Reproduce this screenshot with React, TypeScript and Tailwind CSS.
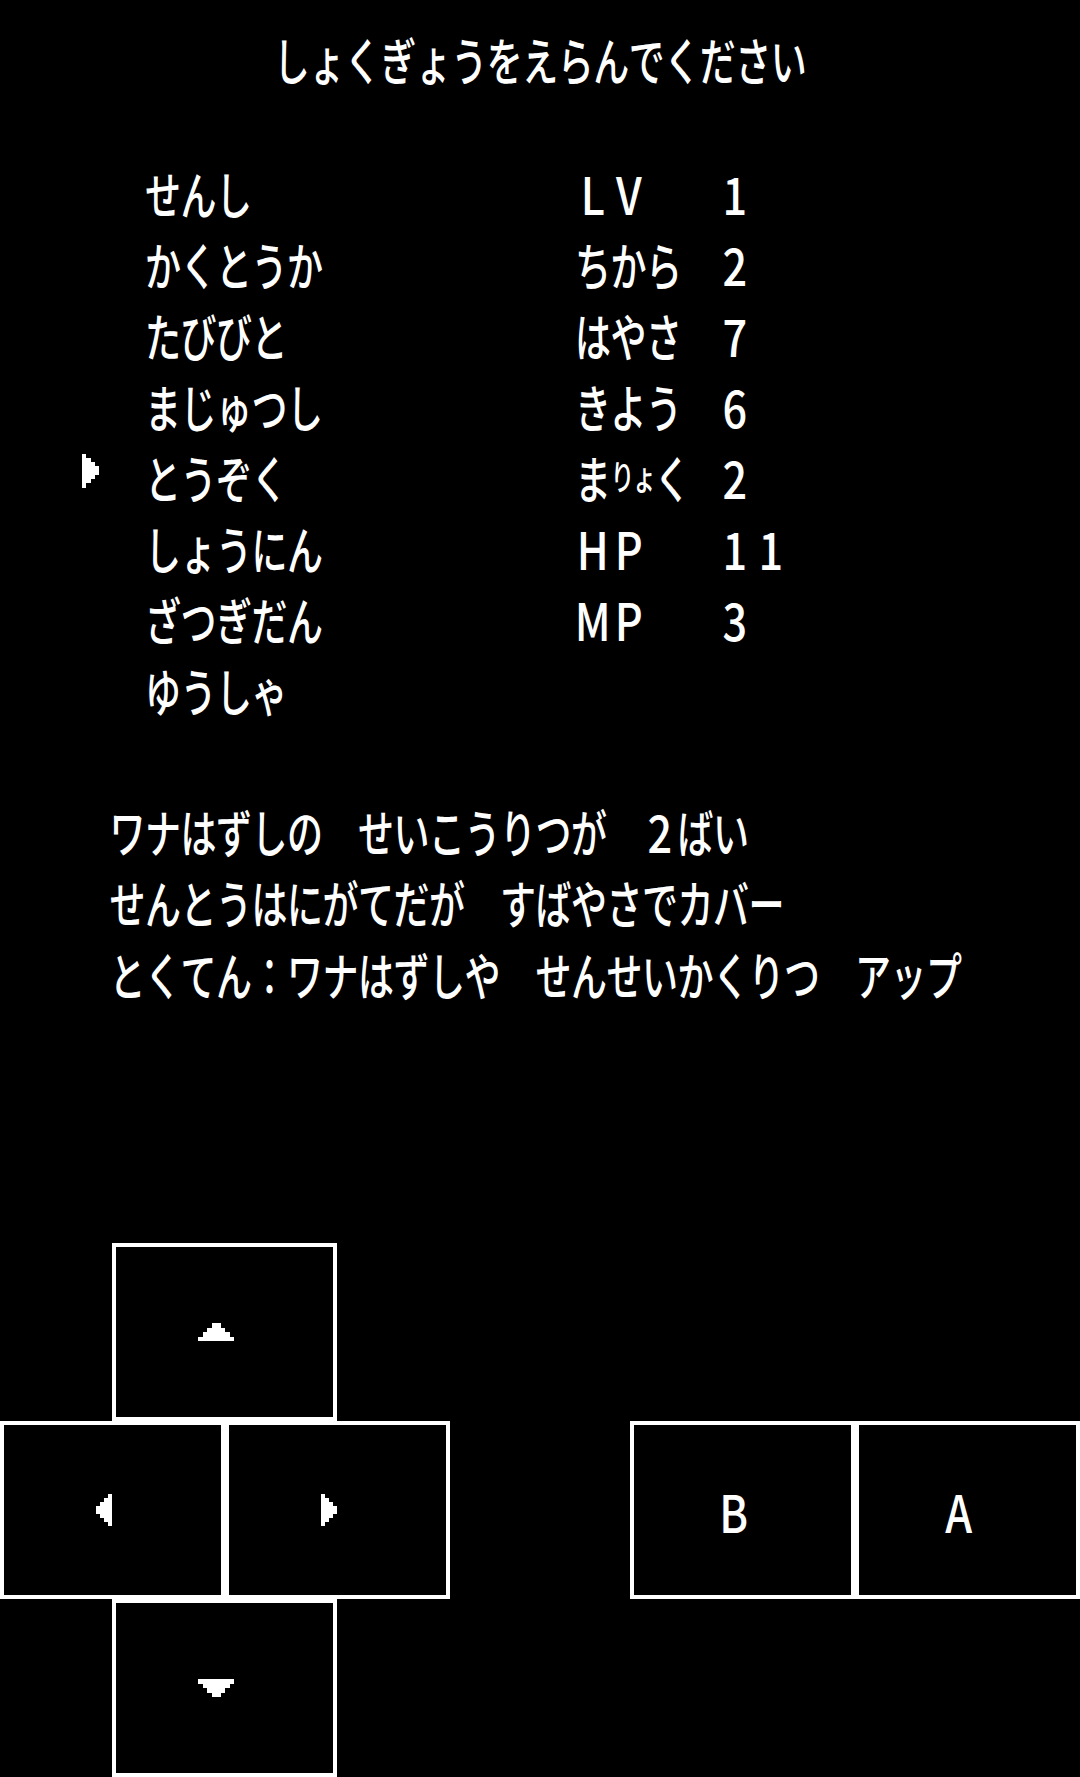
const jobs = [
  'せんし',
  'かくとうか',
  'たびびと',
  'まじゅつし',
  'とうぞく',
  'しょうにん',
  'ざつぎだん',
  'ゆうしゃ',
];

const selected = 4;

const stats: { label: string; value: string }[] = [
  { label: 'LV', value: '1' },
  { label: 'ちから', value: '2' },
  { label: 'はやさ', value: '7' },
  { label: 'きよう', value: '6' },
  { label: 'まりょく', value: '2' },
  { label: 'HP', value: '11' },
  { label: 'MP', value: '3' },
];

const description = [
  'ワナはずしの　せいこうりつが　2ばい',
  'せんとうはにがてだが　すばやさでカバー',
  'とくてん：ワナはずしや　せんせいかくりつ　アップ',
];

const HALF = new Set(['り', 'ょ']);
const ASCII = /[A-Za-z0-9]/;

function cellClass(ch: string, squeeze: boolean) {
  if (squeeze && HALF.has(ch)) return 'inline-block w-[22px] shrink-0 text-center text-[24px] leading-[36px]';
  if (ASCII.test(ch)) return 'inline-block w-[35.5px] shrink-0 scale-x-[1.2] text-center';
  return 'inline-block w-[35.5px] shrink-0 text-center';
}

// every glyph sits in a fixed 35.5px cell, then the line is stretched tall
function Cells({ text, squeeze = false }: { text: string; squeeze?: boolean }) {
  return (
    <span className="inline-flex scale-y-[1.42]">
      {Array.from(text).map((ch, i) => (
        <span key={i} className={cellClass(ch, squeeze)}>
          {ch}
        </span>
      ))}
    </span>
  );
}

// stepped right-pointing triangle, rotated for the other directions
function Arrow({ className = '' }: { className?: string }) {
  return (
    <svg viewBox="0 0 18 36" className={`shrink-0 fill-white ${className}`} shapeRendering="crispEdges">
      <polygon points="0,0 4.5,0 4.5,4.5 9,4.5 9,9 13.5,9 13.5,13.5 18,13.5 18,22.5 13.5,22.5 13.5,27 9,27 9,31.5 4.5,31.5 4.5,36 0,36" />
    </svg>
  );
}

function Pad({ children }: { children: React.ReactNode }) {
  return (
    <button className="flex h-[178px] w-[225px] shrink-0 items-center justify-center border-4 border-white bg-black pr-[17px] text-[36px] leading-[36px] text-white">
      {children}
    </button>
  );
}

export default function App() {
  return (
    <div className="flex h-[1777px] w-[1080px] flex-col overflow-hidden bg-black font-['Noto_Sans_CJK_JP','Noto_Sans',sans-serif] text-[36px] leading-[36px] font-medium text-white">
      {/* title */}
      <h1 className="mt-[22px] flex h-[71px] items-center justify-center font-medium">
        <Cells text="しょくぎょうをえらんでください" />
      </h1>

      {/* job list + status */}
      <div className="mt-[63px] flex">
        <ul className="w-[575px] pl-[82px]">
          {jobs.map((job, i) => (
            <li key={job} className="flex h-[71px] items-center">
              <span className="flex w-[63px] items-center">
                {i === selected && <Arrow className="mb-[10px] h-[35px] w-[17px]" />}
              </span>
              <Cells text={job} />
            </li>
          ))}
        </ul>
        <dl>
          {stats.map((s) => (
            <div key={s.label} className="flex h-[71px] items-center">
              <dt className="w-[142px]">
                <Cells text={s.label} squeeze />
              </dt>
              <dd>
                <Cells text={s.value} />
              </dd>
            </div>
          ))}
        </dl>
      </div>

      {/* job description */}
      <div className="mt-[70px] pl-[109.5px]">
        {description.map((line) => (
          <p key={line} className="flex h-[71.5px] items-center">
            <Cells text={line} />
          </p>
        ))}
      </div>

      {/* controls */}
      <div className="mt-auto flex flex-col">
        <div className="flex pl-[112px]">
          <Pad>
            <Arrow className="h-[36px] w-[18px] -rotate-90" />
          </Pad>
        </div>
        <div className="flex justify-between">
          <div className="flex">
            <Pad>
              <Arrow className="h-[32px] w-[18px] rotate-180" />
            </Pad>
            <Pad>
              <Arrow className="h-[32px] w-[18px]" />
            </Pad>
          </div>
          <div className="flex">
            <Pad>
              <Cells text="B" />
            </Pad>
            <Pad>
              <Cells text="A" />
            </Pad>
          </div>
        </div>
        <div className="flex pl-[112px]">
          <Pad>
            <Arrow className="h-[36px] w-[18px] rotate-90" />
          </Pad>
        </div>
      </div>
    </div>
  );
}
